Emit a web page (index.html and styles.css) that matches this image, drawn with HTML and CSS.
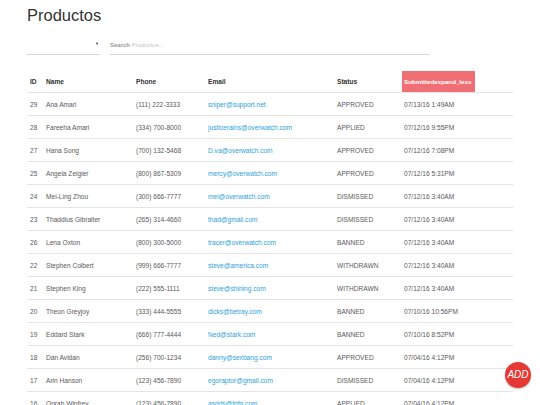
FILE: index.html
```html
<!DOCTYPE html>
<html>
<head>
<meta charset="utf-8">
<link rel="stylesheet" href="styles.css">
</head>
<body>
<div class="page">
  <h1 class="title">Productos</h1>
  <div class="filters">
    <div class="select"><span class="arrow">▼</span></div>
    <div class="search"><span class="search-label">Search</span> <span class="search-ph">Productos...</span></div>
  </div>
  <table class="grid">
    <colgroup>
      <col class="c-id"><col class="c-name"><col class="c-phone"><col class="c-email"><col class="c-status"><col class="c-sub"><col class="c-rest">
    </colgroup>
    <thead>
      <tr><th>ID</th><th>Name</th><th>Phone</th><th>Email</th><th>Status</th><th class="sorted">Submittedexpand_less</th><th></th></tr>
    </thead>
    <tbody>
      <tr><td>29</td><td>Ana Amari</td><td>(111) 222-3333</td><td class="email">sniper@support.net</td><td>APPROVED</td><td class="date">07/13/16 1:49AM</td><td></td></tr>
      <tr><td>28</td><td>Fareeha Amari</td><td>(334) 700-8000</td><td class="email">justicerains@overwatch.com</td><td>APPLIED</td><td class="date">07/12/16 9:55PM</td><td></td></tr>
      <tr><td>27</td><td>Hana Song</td><td>(700) 132-5468</td><td class="email">D.va@overwatch.com</td><td>APPROVED</td><td class="date">07/12/16 7:08PM</td><td></td></tr>
      <tr><td>25</td><td>Angela Zeigler</td><td>(800) 867-5309</td><td class="email">mercy@overwatch.com</td><td>APPROVED</td><td class="date">07/12/16 5:31PM</td><td></td></tr>
      <tr><td>24</td><td>Mei-Ling Zhou</td><td>(300) 666-7777</td><td class="email">mei@overwatch.com</td><td>DISMISSED</td><td class="date">07/12/16 3:40AM</td><td></td></tr>
      <tr><td>23</td><td>Thaddius Gibralter</td><td>(265) 314-4660</td><td class="email">thad@gmail.com</td><td>DISMISSED</td><td class="date">07/12/16 3:40AM</td><td></td></tr>
      <tr><td>26</td><td>Lena Oxton</td><td>(800) 300-5000</td><td class="email">tracer@overwatch.com</td><td>BANNED</td><td class="date">07/12/16 3:40AM</td><td></td></tr>
      <tr><td>22</td><td>Stephen Colbert</td><td>(999) 666-7777</td><td class="email">steve@america.com</td><td>WITHDRAWN</td><td class="date">07/12/16 3:40AM</td><td></td></tr>
      <tr><td>21</td><td>Stephen King</td><td>(222) 555-1111</td><td class="email">steve@shining.com</td><td>WITHDRAWN</td><td class="date">07/12/16 3:40AM</td><td></td></tr>
      <tr><td>20</td><td>Theon Greyjoy</td><td>(333) 444-5555</td><td class="email">dicks@betray.com</td><td>BANNED</td><td class="date">07/10/16 10:56PM</td><td></td></tr>
      <tr><td>19</td><td>Eddard Stark</td><td>(666) 777-4444</td><td class="email">Ned@stark.com</td><td>BANNED</td><td class="date">07/10/16 8:52PM</td><td></td></tr>
      <tr><td>18</td><td>Dan Avidan</td><td>(256) 700-1234</td><td class="email">danny@sexbang.com</td><td>APPROVED</td><td class="date">07/04/16 4:12PM</td><td></td></tr>
      <tr><td>17</td><td>Arin Hanson</td><td>(123) 456-7890</td><td class="email">egoraptor@gmail.com</td><td>DISMISSED</td><td class="date">07/04/16 4:12PM</td><td></td></tr>
      <tr><td>16</td><td>Oprah Winfrey</td><td>(123) 456-7890</td><td class="email">asdds@fgfg.com</td><td>APPLIED</td><td class="date">07/04/16 4:12PM</td><td></td></tr>
    </tbody>
  </table>
</div>
<button class="fab">ADD</button>
</body>
</html>
```
FILE: styles.css
```css
html, body {
  margin: 0;
  padding: 0;
  background: #ffffff;
  font-family: "Liberation Sans", Arial, sans-serif;
  overflow: hidden;
}
.page {
  padding: 0 0 0 27px;
  width: 486px;
}
.title {
  margin: 0;
  padding-top: 5px;
  font-size: 16.5px;
  font-weight: normal;
  color: #333333;
  line-height: 20px;
  height: 20px;
}
.filters {
  display: flex;
  gap: 10px;
  margin-top: 9px;
  height: 21px;
}
.select {
  width: 73px;
  border-bottom: 1px solid #d6d6d6;
  position: relative;
  box-sizing: border-box;
}
.arrow {
  position: absolute;
  right: 1px;
  top: 7px;
  font-size: 4px;
  color: #333;
}
.search {
  width: 320px;
  border-bottom: 1px solid #d6d6d6;
  box-sizing: border-box;
  font-size: 6px;
  line-height: 8px;
  padding-top: 7px;
}
.search-label {
  color: #9a9a9a;
  font-weight: bold;
}
.search-ph {
  color: #c4c4c4;
}
.grid {
  margin-top: 16px;
  border-collapse: collapse;
  table-layout: fixed;
  width: 486px;
  font-size: 6.6px;
  color: #5a5a5a;
}
.c-id { width: 16px; }
.c-name { width: 90px; }
.c-phone { width: 72px; }
.c-email { width: 129px; }
.c-status { width: 68px; }
.c-sub { width: 73px; }
.c-rest { width: 38px; }
.grid th {
  text-align: left;
  font-weight: bold;
  color: #333333;
  height: 21px;
  padding: 0 0 0 3px;
  border-bottom: 1px solid #e4e4e4;
  white-space: nowrap;
  overflow: hidden;
}
.grid th.sorted {
  background: #ef6f75;
  color: #ffffff;
  padding-left: 2px;
  font-size: 6.2px;
}
.grid td {
  height: 22px;
  padding: 0 0 0 3px;
  border-bottom: 1px solid #e4e4e4;
  white-space: nowrap;
  overflow: hidden;
}
.grid td.date {
  padding-left: 2px;
}
.grid td.email {
  color: #2c9fd9;
}
.fab {
  position: absolute;
  left: 505px;
  top: 362px;
  width: 26px;
  height: 26px;
  border-radius: 50%;
  border: none;
  background: #e53935;
  color: #ffffff;
  font-family: "Liberation Sans", Arial, sans-serif;
  font-style: italic;
  font-size: 10px;
  padding: 0;
  text-align: center;
  line-height: 26px;
  box-shadow: 0 1px 2px rgba(0,0,0,0.25);
}
```
